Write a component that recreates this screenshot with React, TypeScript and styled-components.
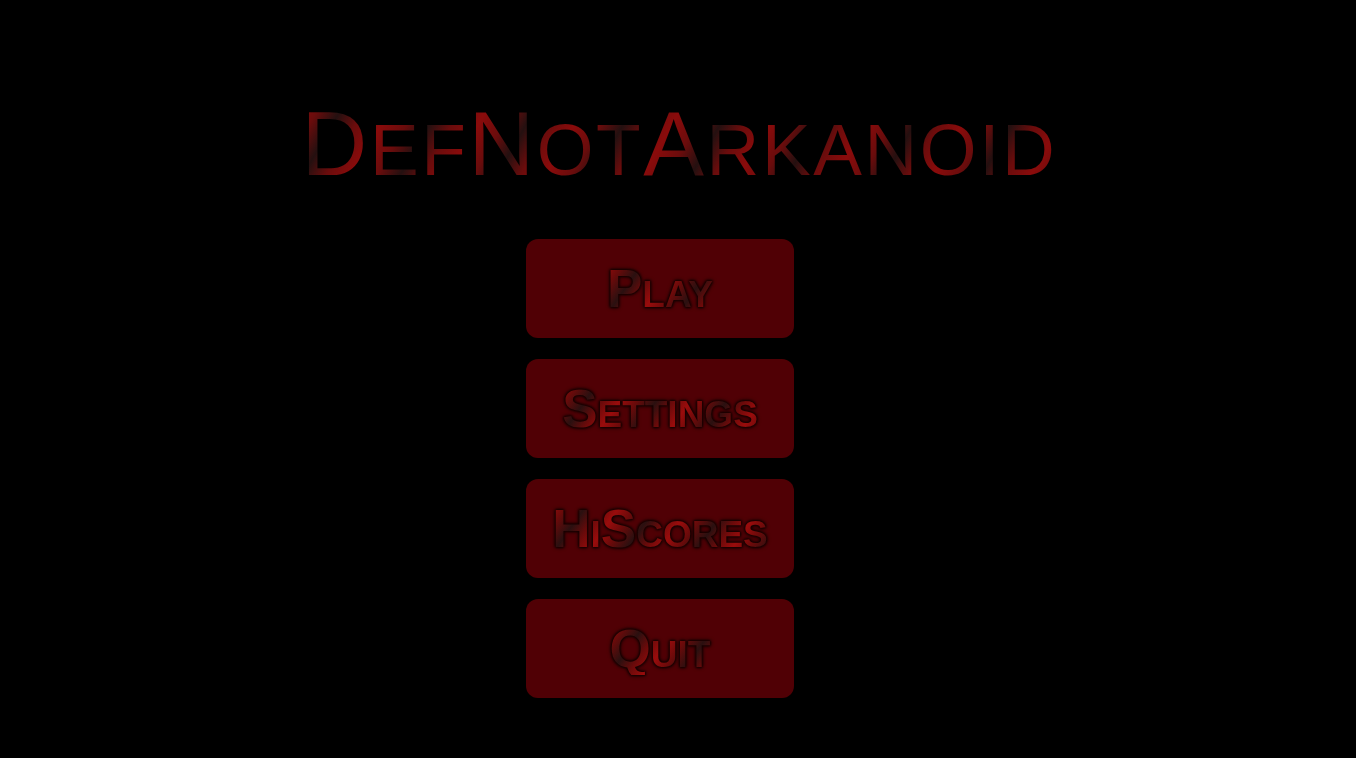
import React from "react";
import styled, { createGlobalStyle } from "styled-components";

const GlobalStyle = createGlobalStyle`
  html, body {
    margin: 0;
    padding: 0;
    background: #000;
  }
  body {
    font-family: "Liberation Sans", Arial, sans-serif;
  }
`;

const Screen = styled.main`
  min-height: 100vh;
  background: #000;
  display: flex;
  flex-direction: column;
  align-items: center;
  padding-top: 98px;
  box-sizing: border-box;
`;

const Title = styled.h1`
  margin: 0 0 50px;
  padding-left: 3px;
  font-family: "Liberation Sans", Arial, sans-serif;
  font-weight: 400;
  font-size: 91px;
  line-height: 91px;
  letter-spacing: 2.6px;
  white-space: nowrap;
  background: repeating-linear-gradient(
    120deg,
    #8a0b0b 0px,
    #6a0c0c 22px,
    #241010 42px,
    #6a0c0c 62px,
    #8a0b0b 84px
  );
  -webkit-background-clip: text;
  background-clip: text;
  color: transparent;
`;

const Cap = styled.span<{ $small?: boolean }>`
  font-size: ${(p) => (p.$small ? "73px" : "91px")};
  line-height: 1;
  text-transform: uppercase;
`;

const Menu = styled.nav`
  display: flex;
  flex-direction: column;
  gap: 21px;
  margin-right: 36px;
`;

const MenuButton = styled.button`
  width: 268px;
  height: 99px;
  border: none;
  border-radius: 12px;
  background: #500005;
  display: flex;
  align-items: center;
  justify-content: center;
  padding: 0;
  cursor: pointer;
`;

const Label = styled.span`
  font-family: "Liberation Sans", Arial, sans-serif;
  font-weight: 700;
  font-size: 53px;
  line-height: 1;
  font-variant: small-caps;
  white-space: nowrap;
  background: repeating-linear-gradient(
    125deg,
    #9a0c0c 0px,
    #6a0a0a 14px,
    #2a1010 30px,
    #6a0a0a 44px,
    #9a0c0c 58px
  );
  -webkit-background-clip: text;
  background-clip: text;
  color: transparent;
  filter: drop-shadow(0 0 1px #160000) drop-shadow(0 0 1px #160000)
    drop-shadow(0 0 1.5px #160000);
`;

const titleParts: Array<[string, boolean]> = [
  ["D", false],
  ["ef", true],
  ["N", false],
  ["ot", true],
  ["A", false],
  ["rkanoid", true],
];

const items = ["Play", "Settings", "HiScores", "Quit"];

export default function App() {
  return (
    <>
      <GlobalStyle />
      <Screen>
        <Title>
          {titleParts.map(([t, small], i) => (
            <Cap key={i} $small={small}>
              {t}
            </Cap>
          ))}
        </Title>
        <Menu>
          {items.map((item) => (
            <MenuButton key={item}>
              <Label>{item}</Label>
            </MenuButton>
          ))}
        </Menu>
      </Screen>
    </>
  );
}
